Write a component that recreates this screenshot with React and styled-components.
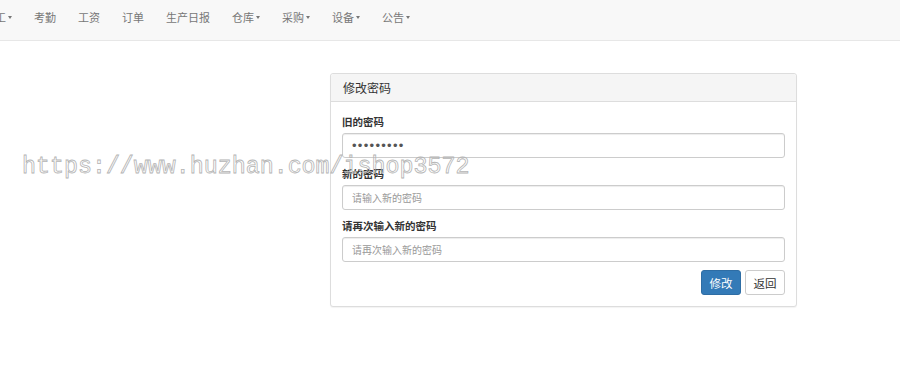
import React from "react";
import styled, { createGlobalStyle } from "styled-components";

const navItems = [
  { label: "员工", caret: true },
  { label: "考勤" },
  { label: "工资" },
  { label: "订单" },
  { label: "生产日报" },
  { label: "仓库", caret: true },
  { label: "采购", caret: true },
  { label: "设备", caret: true },
  { label: "公告", caret: true },
];

function App() {
  return (
    <Page>
      <GlobalStyle />
      <Navbar>
        <NavList>
          {navItems.map((item) => (
            <NavLink key={item.label}>
              {item.label}
              {item.caret && <Caret />}
            </NavLink>
          ))}
        </NavList>
      </Navbar>
      <Main>
        <Panel>
          <PanelHeading>修改密码</PanelHeading>
          <PanelBody>
            <Field>
              <Label>旧的密码</Label>
              <Input type="password" defaultValue="123456789" />
            </Field>
            <Field>
              <Label>新的密码</Label>
              <Input type="password" placeholder="请输入新的密码" />
            </Field>
            <Field>
              <Label>请再次输入新的密码</Label>
              <Input type="password" placeholder="请再次输入新的密码" />
            </Field>
            <Actions>
              <Button primary>修改</Button>
              <Button>返回</Button>
            </Actions>
          </PanelBody>
        </Panel>
      </Main>
      <Watermark>https://www.huzhan.com/ishop3572</Watermark>
    </Page>
  );
}

export default App;

const GlobalStyle = createGlobalStyle`
  html, body {
    margin: 0;
    padding: 0;
    background: #fff;
    overflow: hidden;
  }
  body {
    font-family: "Noto Sans CJK SC", "Liberation Sans", sans-serif;
    color: #333;
  }
`;

const Page = styled.div`
  position: relative;
  width: 900px;
  height: 386px;
  overflow: hidden;
`;

const Navbar = styled.nav`
  height: 40px;
  background: #f8f8f8;
  border-bottom: 1px solid #e7e7e7;
  overflow: hidden;
`;

const NavList = styled.ul`
  display: flex;
  margin: 0 0 0 -27px;
  padding: 0;
  list-style: none;
`;

const NavLink = styled.li`
  display: flex;
  align-items: center;
  padding: 9px 11px 15px;
  height: 16px;
  font-size: 11px;
  line-height: 16px;
  color: #777;
  white-space: nowrap;
`;

const Caret = styled.span`
  display: inline-block;
  margin-left: 2px;
  width: 0;
  height: 0;
  border-top: 3px solid #777;
  border-left: 2.5px solid transparent;
  border-right: 2.5px solid transparent;
`;

const Main = styled.main`
  padding: 32px 0 0 330px;
`;

const Panel = styled.section`
  width: 465px;
  background: #fff;
  border: 1px solid #ddd;
  border-radius: 3px;
  box-shadow: 0 1px 1px rgba(0, 0, 0, 0.05);
`;

const PanelHeading = styled.div`
  height: 27px;
  padding: 0 12px;
  display: flex;
  align-items: center;
  background: #f5f5f5;
  border-bottom: 1px solid #ddd;
  border-radius: 3px 3px 0 0;
  font-size: 12px;
  color: #333;
`;

const PanelBody = styled.div`
  padding: 12px 11px 11px 11px;
  display: flex;
  flex-direction: column;
`;

const Field = styled.div`
  display: flex;
  flex-direction: column;
  margin-bottom: 8px;
`;

const Label = styled.label`
  font-size: 10.5px;
  font-weight: bold;
  line-height: 15px;
  margin-bottom: 4px;
  color: #333;
`;

const Input = styled.input`
  box-sizing: border-box;
  height: 25px;
  width: 100%;
  padding: 0 9px;
  border: 1px solid #ccc;
  border-radius: 3px;
  box-shadow: inset 0 1px 1px rgba(0, 0, 0, 0.075);
  font-family: "Liberation Sans", sans-serif;
  font-size: 13px;
  color: #555;
  letter-spacing: 1.3px;
  outline: none;
  &::placeholder {
    font-family: "Noto Sans CJK SC", "Liberation Sans", sans-serif;
    color: #999;
    font-size: 10px;
    letter-spacing: 0;
  }
`;

const Actions = styled.div`
  display: flex;
  justify-content: flex-end;
  gap: 4px;
`;

const Button = styled.button`
  box-sizing: border-box;
  width: 40px;
  height: 25px;
  padding: 0;
  border-radius: 3px;
  font-family: "Noto Sans CJK SC", "Liberation Sans", sans-serif;
  font-size: 11.5px;
  background: ${(p) => (p.primary ? "#337ab7" : "#fff")};
  border: 1px solid ${(p) => (p.primary ? "#2e6da4" : "#ccc")};
  color: ${(p) => (p.primary ? "#fff" : "#333")};
`;

const Watermark = styled.div`
  position: absolute;
  left: 22px;
  top: 152px;
  font-family: "Liberation Mono", monospace;
  font-size: 23.3px;
  line-height: 30px;
  color: transparent;
  -webkit-text-stroke: 0.8px #b4b4b4;
  white-space: nowrap;
  pointer-events: none;
`;
